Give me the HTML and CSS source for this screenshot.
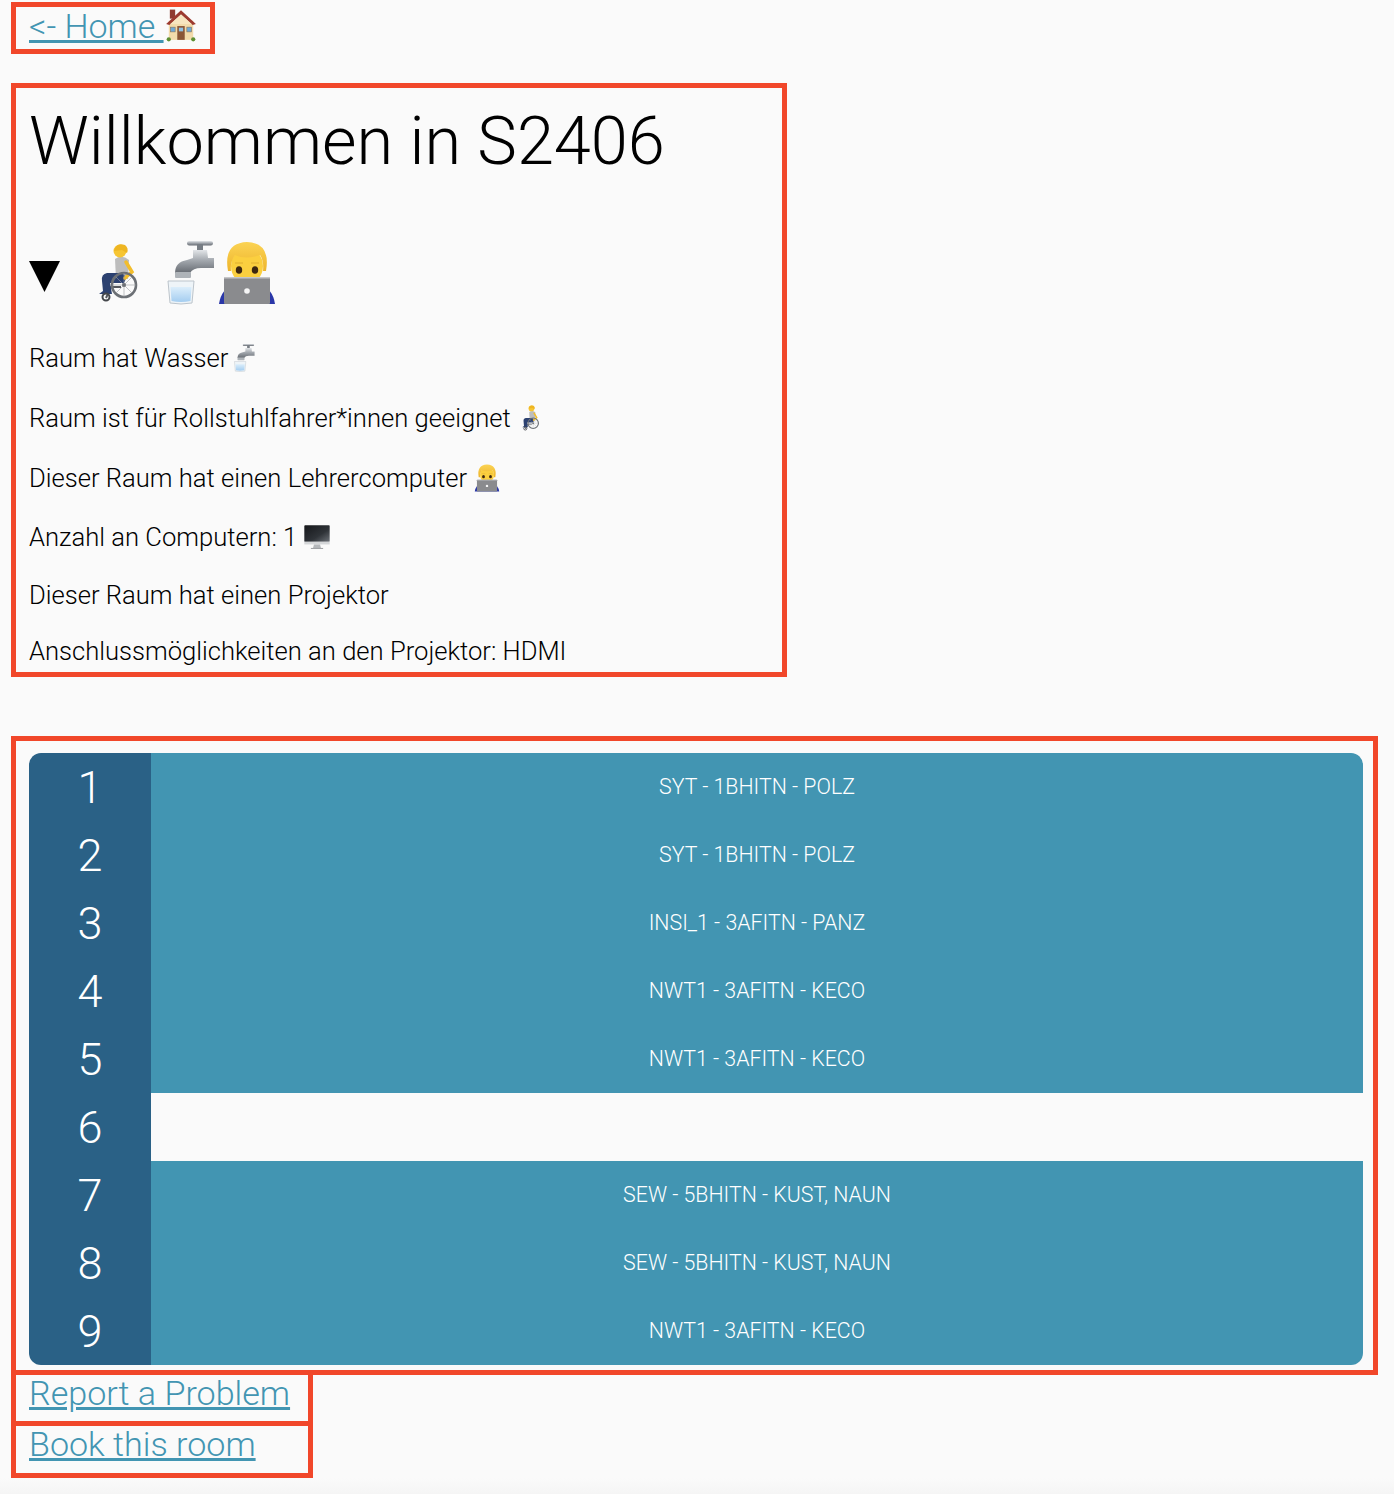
FILE: index.html
```html
<!DOCTYPE html>
<html>
  <head>
    <title>S2406</title>
    <meta charset="utf-8">
    <link rel="stylesheet" href="styles.css">
  </head>
  <body>
    <svg class="sprites" width="0" height="0">
      <defs>
        <linearGradient id="steel" x1="0" y1="0" x2="0" y2="1">
          <stop offset="0" stop-color="#e2e5e8"/>
          <stop offset=".45" stop-color="#a3a8ae"/>
          <stop offset="1" stop-color="#666b72"/>
        </linearGradient>
        <linearGradient id="water" x1="0" y1="0" x2="0" y2="1">
          <stop offset="0" stop-color="#dceefb"/>
          <stop offset="1" stop-color="#a4cdf0"/>
        </linearGradient>
        <linearGradient id="screen" x1="0" y1="0" x2="1" y2="1">
          <stop offset="0" stop-color="#15171a"/>
          <stop offset=".6" stop-color="#2f3338"/>
          <stop offset="1" stop-color="#6d7278"/>
        </linearGradient>
        <linearGradient id="hair" x1="0" y1="0" x2="0" y2="1">
          <stop offset="0" stop-color="#fbd354"/>
          <stop offset="1" stop-color="#eeb52c"/>
        </linearGradient>

        <symbol id="house" viewBox="0 0 64 64">
          <rect x="11" y="3" width="10" height="17" fill="#8f3b30"/>
          <rect x="9" y="24" width="46" height="36" fill="#f2dbab"/>
          <path d="M32 4 L4 30 L10 32 L32 12 L54 32 L60 30 Z" fill="#9c3a2f"/>
          <path d="M32 12 L12 30 L52 30 Z" fill="#f7e5bf"/>
          <rect x="25" y="34" width="14" height="26" fill="#8a5636"/>
          <rect x="28" y="37" width="8" height="7" fill="#8fc1e3"/>
          <rect x="12" y="36" width="9" height="9" fill="#6fa9d6" stroke="#8a6a4a"/>
          <rect x="43" y="36" width="9" height="9" fill="#6fa9d6" stroke="#8a6a4a"/>
          <circle cx="9" cy="59" r="4" fill="#5d8f33"/>
          <circle cx="55" cy="59" r="4" fill="#5d8f33"/>
        </symbol>

        <symbol id="wheelchair" viewBox="0 0 64 64">
          <path d="M19 57 L24 46 L34 46" fill="none" stroke="#55585d" stroke-width="2"/>
          <path d="M28 18 Q35 13 42 19 L41 38 L29 38 Z" fill="#bdbdbd"/>
          <path d="M35 32 L20 32 Q14 33 15 40 L16 50 L12 53 L25 53 L23 42 L37 42 Q41 36 35 32 Z" fill="#2c4170"/>
          <path d="M39 21 L45 31 L38 37" fill="none" stroke="#f2bd2c" stroke-width="3.500" stroke-linecap="round"/>
          <circle cx="33" cy="10" r="6.500" fill="#f6c533"/>
          <path d="M27 10 Q29 1 38 4 Q42 7 40 12 L35 9 Z" fill="#eeb522"/>
          <circle cx="37" cy="44" r="12" fill="none" stroke="#6c7075" stroke-width="2.600"/>
          <path d="M37 32 V56 M25 44 H49 M29 36 L45 52 M45 36 L29 52" stroke="#9a9da2" stroke-width=".6"/>
          <circle cx="37" cy="44" r="2" fill="#6c7075"/>
          <circle cx="19" cy="56" r="3.500" fill="none" stroke="#44474b" stroke-width="2"/>
        </symbol>

        <symbol id="tap" viewBox="0 0 64 64">
          <rect x="36" y="0" width="26" height="4.500" rx="2.200" fill="url(#steel)"/>
          <rect x="46" y="3" width="6" height="8" fill="#777d84"/>
          <path d="M42 9 H56 L57 17 H63 V27 H50 Q42 27 39 32 H24 Q24 21 36 19 L42 17 Z" fill="url(#steel)"/>
          <rect x="24" y="31" width="16" height="6" rx="1" fill="#aeb3b8"/>
          <path d="M17 40 H43 L41 62 Q30 64 19 62 Z" fill="#eef4f8" stroke="#bcc4cb"/>
          <path d="M19.500 46 H40.500 L39.500 60 Q30 62 20.500 60 Z" fill="url(#water)"/>
        </symbol>

        <symbol id="teacher" viewBox="0 0 64 64">
          <path d="M4 63 Q6 48 20 42 H44 Q58 48 60 63 Z" fill="#2a37a8"/>
          <ellipse cx="32" cy="25" rx="16" ry="18" fill="#fbcf3f"/>
          <path d="M13 30 Q8 2 32 1 Q56 2 51 30 L48 30 Q49 20 45 14 Q30 19 20 14 Q15 21 16 30 Z" fill="url(#hair)"/>
          <path d="M20 22 H28 M36 22 H44" stroke="#d9a62c" stroke-width=".8"/>
          <ellipse cx="24" cy="29" rx="3.200" ry="3.800" fill="#3d2710"/>
          <ellipse cx="40" cy="29" rx="3.200" ry="3.800" fill="#3d2710"/>
          <rect x="9" y="36" width="46" height="27" rx="1" fill="#8a8b8e"/>
          <rect x="9" y="36" width="46" height="1.500" fill="#c5c6c8"/>
          <circle cx="32" cy="50" r="2.800" fill="#f5f5f5"/>
        </symbol>

        <symbol id="desktop" viewBox="0 0 64 64">
          <rect x="3" y="5" width="58" height="38" rx="2" fill="url(#screen)"/>
          <rect x="3" y="43" width="58" height="6" fill="#d4d6d8"/>
          <path d="M25 49 H39 L41 57 H23 Z" fill="#b5b8bb"/>
          <rect x="18" y="57" width="28" height="2" fill="#8d9094"/>
        </symbol>
      </defs>
    </svg>

    <div class="box home-box">
      <a href="#">&lt;- Home <svg class="emoji-inline"><use href="#house"/></svg></a>
    </div>

    <div class="box info-box">
      <h1>Willkommen in S2406</h1>
      <details open>
        <summary>
          <span class="marker"></span>
          <svg class="emoji-big"><use href="#wheelchair"/></svg>
          <svg class="emoji-big"><use href="#tap"/></svg>
          <svg class="emoji-big"><use href="#teacher"/></svg>
        </summary>
        <p class="with-emoji">Raum hat Wasser <svg class="emoji-small tap-small"><use href="#tap"/></svg></p>
        <p class="with-emoji">Raum ist für Rollstuhlfahrer*innen geeignet <svg class="emoji-small"><use href="#wheelchair"/></svg></p>
        <p class="with-emoji">Dieser Raum hat einen Lehrercomputer <svg class="emoji-small"><use href="#teacher"/></svg></p>
        <p class="with-screen">Anzahl an Computern: 1 <svg class="emoji-small"><use href="#desktop"/></svg></p>
        <p>Dieser Raum hat einen Projektor</p>
        <p>Anschlussmöglichkeiten an den Projektor: HDMI</p>
      </details>
    </div>

    <div class="box table-box">
      <div class="timetable">
        <div class="hour">1</div><div class="lesson">SYT - 1BHITN - POLZ</div>
        <div class="hour">2</div><div class="lesson">SYT - 1BHITN - POLZ</div>
        <div class="hour">3</div><div class="lesson">INSI_1 - 3AFITN - PANZ</div>
        <div class="hour">4</div><div class="lesson">NWT1 - 3AFITN - KECO</div>
        <div class="hour">5</div><div class="lesson">NWT1 - 3AFITN - KECO</div>
        <div class="hour">6</div><div class="lesson empty"></div>
        <div class="hour">7</div><div class="lesson">SEW - 5BHITN - KUST, NAUN</div>
        <div class="hour">8</div><div class="lesson">SEW - 5BHITN - KUST, NAUN</div>
        <div class="hour">9</div><div class="lesson">NWT1 - 3AFITN - KECO</div>
      </div>
    </div>

    <div class="box link-box"><a href="#">Report a Problem</a></div>
    <div class="box link-box last-link"><a href="#">Book this room</a></div>
  </body>
</html>
```

FILE: styles.css
```css
* {
    box-sizing: border-box;
}

html {
    height: 100%;
    background: linear-gradient(#fafafa calc(100% - 16px), #f5f5f5);
}

body {
    margin: 0;
    padding: 2px 16px 0 11px;
    color: #000;
    font-family: Roboto, "Liberation Sans", sans-serif;
    font-weight: 300;
}

.sprites {
    display: block;
    position: absolute;
}

a {
    color: #4295b2;
}

.box {
    border: 5px solid #f1472a;
    padding: 0 13px;
}

.home-box {
    width: 204px;
    height: 52px;
    font-size: 34px;
    line-height: 38px;
    white-space: nowrap;
    margin-bottom: 29px;
}

.info-box {
    width: 776px;
    height: 594px;
    margin-bottom: 59px;
}

h1 {
    margin: 0;
    padding: 11px 0 0;
    font-size: 66.7px;
    font-weight: 300;
    line-height: 85px;
}

summary {
    display: flex;
    align-items: flex-end;
    list-style: none;
    margin: 57px 0 10px;
    height: 64px;
}

.marker {
    width: 31px;
    height: 31px;
    margin: 0 27px 13px 0;
    background: #000;
    clip-path: polygon(0 0, 100% 0, 50% 100%);
}

.emoji-big {
    width: 64px;
    height: 64px;
}

.emoji-inline {
    width: 34px;
    height: 34px;
    vertical-align: -4px;
}

.emoji-small {
    width: 28px;
    height: 28px;
    vertical-align: -5px;
}

.tap-small {
    margin-left: -8px;
}

p {
    margin: 0;
    padding-top: 26px;
    font-size: 25.6px;
    line-height: 30px;
}

p.with-emoji {
    line-height: 34px;
}

p.with-screen {
    line-height: 33px;
}

.table-box {
    width: 1367px;
    padding: 12px 10px 5px 13px;
}

.timetable {
    display: grid;
    grid-template-columns: 122px 1fr;
    grid-auto-rows: 68px;
    border-radius: 12px;
    overflow: hidden;
}

.hour {
    display: flex;
    align-items: center;
    justify-content: center;
    background: #2a6186;
    color: #fff;
    font-size: 45px;
}

.lesson {
    display: flex;
    align-items: center;
    justify-content: center;
    padding-bottom: 2px;
    background: #4295b2;
    color: #fff;
    font-size: 21.33px;
}

.lesson.empty {
    background: #fafafa;
}

.link-box {
    width: 302px;
    height: 56px;
    margin-top: -5px;
    font-size: 34.1px;
    line-height: 37px;
    white-space: nowrap;
}

.last-link {
    height: 57px;
}
```
